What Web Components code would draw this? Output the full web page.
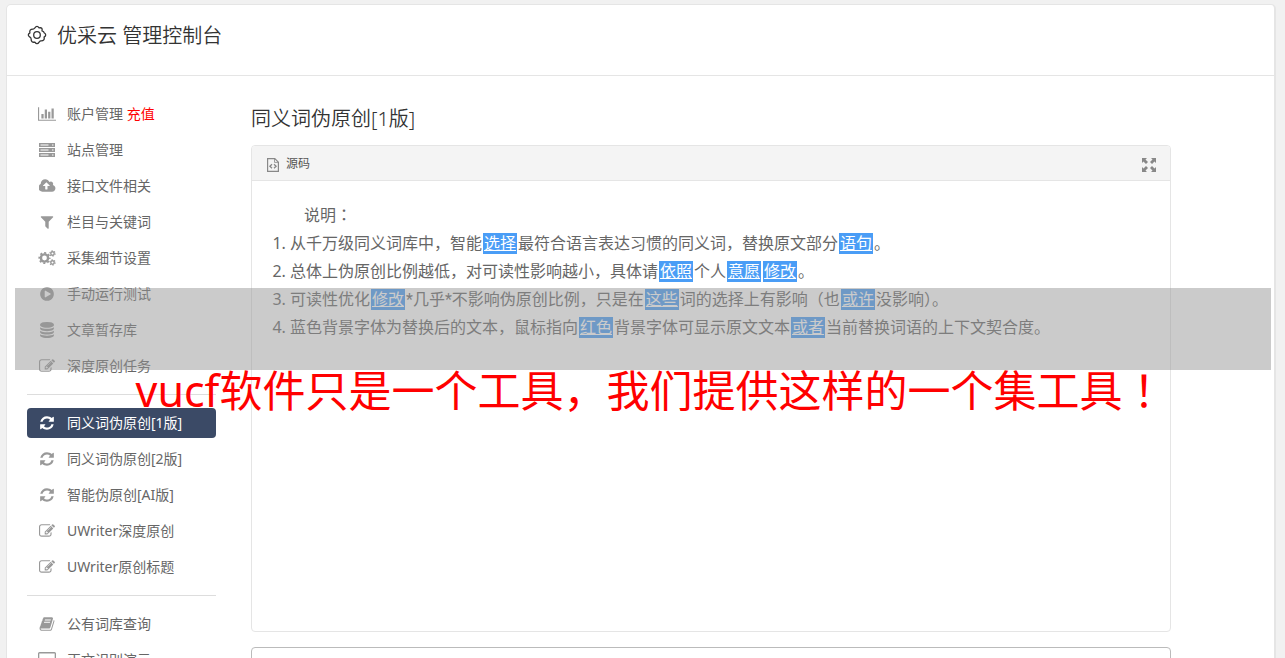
<!DOCTYPE html>
<html lang="zh-CN">
<head>
<meta charset="utf-8">
<title>优采云 管理控制台</title>
<style>
html{scrollbar-width:none}
body{margin:0;padding:4px 9px 20px 6px;background:#f1f1f1;color:#666;position:relative;
font-family:"Noto Sans","Noto Sans CJK SC",sans-serif;font-size:14px;line-height:30px}
.centred{font-family:"Noto Sans CJK TC",sans-serif;line-height:0}
</style>
</head>
<body>
<app-panel>
  <app-header slot="header">优采云 管理控制台</app-header>
  <nav-list slot="nav">
    <nav-item icon="chart">账户管理 <span style="color:#f00">充值</span></nav-item>
    <nav-item icon="server">站点管理</nav-item>
    <nav-item icon="cloud">接口文件相关</nav-item>
    <nav-item icon="filter">栏目与关键词</nav-item>
    <nav-item icon="cogs">采集细节设置</nav-item>
    <nav-item icon="play">手动运行测试</nav-item>
    <nav-item icon="database">文章暂存库</nav-item>
    <nav-item icon="edit">深度原创任务</nav-item>
  </nav-list>
  <nav-list slot="nav">
    <nav-item icon="refresh" active>同义词伪原创[1版]</nav-item>
    <nav-item icon="refresh">同义词伪原创[2版]</nav-item>
    <nav-item icon="refresh">智能伪原创[AI版]</nav-item>
    <nav-item icon="edit">UWriter深度原创</nav-item>
    <nav-item icon="edit">UWriter原创标题</nav-item>
  </nav-list>
  <nav-list slot="nav">
    <nav-item icon="book">公有词库查询</nav-item>
    <nav-item icon="desktop">正文识别演示</nav-item>
  </nav-list>
  <rewrite-editor heading="同义词伪原创[1版]"></rewrite-editor>
</app-panel>
<notice-banner>vucf软件只是一个工具，我们提供这样的一个集工具<span class="centred" lang="zh-TW">！</span></notice-banner>
<script>
const ICONS = {
  chart:['0 0 2048 1792','<path d="M640 896v512h-256v-512h256zm384-512v1024h-256v-1024h256zm1024 1152v128h-2048v-1536h128v1408h1920zm-640-896v768h-256v-768h256zm384-384v1152h-256v-1152h256z"/>'],
  server:['0 0 18 16','<path fill-rule="evenodd" d="M1 1h16v4H1zM2.500 2.500h8v1h-8zM14 2.500h1.500v1H14zM1 6h16v4H1zM2.500 7.500h8v1h-8zM14 7.500h1.500v1H14zM1 11h16v4H1zM2.500 12.500h8v1h-8zM14 12.500h1.500v1H14z"/>'],
  cloud:['0 0 1920 1792','<path d="M1216 864q0-14-9-23l-352-352q-9-9-23-9t-23 9l-351 351q-10 12-10 24 0 14 9 23t23 9h224v352q0 13 9.500 22.500t22.500 9.500h192q13 0 22.500-9.500t9.500-22.500v-352h224q13 0 22.500-9.500t9.500-22.500zm640 288q0 159-112.500 271.500t-271.500 112.500h-1088q-185 0-316.500-131.500t-131.500-316.500q0-130 70-240t188-165q-2-30-2-43 0-212 150-362t362-150q156 0 285.500 87t188.500 231q71-62 166-62 106 0 181 75t75 181q0 76-41 138 130 31 213.500 135.500t83.500 238.500z"/>'],
  filter:['0 0 1792 1792','<path d="M1595 295q17 41-14 70l-493 493v742q0 42-39 59-13 5-25 5-27 0-45-19l-256-256q-19-19-19-45v-486l-493-493q-31-29-14-70 17-39 59-39h1280q42 0 59 39z"/>'],
  cogs:['0 0 18 16','<g fill="none" stroke="currentColor"><circle cx="6.500" cy="8" r="3.600" stroke-width="2.400"/><circle cx="6.500" cy="8" r="5.200" stroke-width="1.800" stroke-dasharray="2 2.084" stroke-dashoffset="1"/><circle cx="14.500" cy="3.500" r="1.700" stroke-width="1.400"/><circle cx="14.500" cy="3.500" r="2.600" stroke-width="1.200" stroke-dasharray="1.300 1.423"/><circle cx="14.500" cy="12.500" r="1.700" stroke-width="1.400"/><circle cx="14.500" cy="12.500" r="2.600" stroke-width="1.200" stroke-dasharray="1.300 1.423"/></g>'],
  play:['0 0 1792 1792','<path d="M896 128q209 0 385.500 103t279.500 279.500 103 385.500-103 385.500-279.500 279.500-385.500 103-385.500-103-279.500-279.500-103-385.500 103-385.500 279.500-279.500 385.500-103zm384 823q32-18 32-55t-32-55l-544-320q-31-19-64-1-32 19-32 56v640q0 37 32 56 16 8 32 8 17 0 32-9z"/>'],
  database:['0 0 1792 1792','<path d="M896 768q237 0 443-43t325-127v170q0 69-103 128t-280 93.500-385 34.500-385-34.500-280-93.500-103-128v-170q119 84 325 127t443 43zm0 768q237 0 443-43t325-127v170q0 69-103 128t-280 93.500-385 34.500-385-34.500-280-93.500-103-128v-170q119 84 325 127t443 43zm0-384q237 0 443-43t325-127v170q0 69-103 128t-280 93.500-385 34.500-385-34.500-280-93.500-103-128v-170q119 84 325 127t443 43zm0-1152q208 0 385 34.500t280 93.500 103 128v128q0 69-103 128t-280 93.500-385 34.500-385-34.500-280-93.500-103-128v-128q0-69 103-128t280-93.500 385-34.500z"/>'],
  edit:['0 0 1792 1792','<path d="M888 1184l116-116-152-152-116 116v56h96v96h56zm440-720q-16-16-33 1l-350 350q-17 17-1 33t33-1l350-350q17-17 1-33zm80 594v190q0 119-84.500 203.500t-203.500 84.500h-832q-119 0-203.500-84.500t-84.500-203.500v-832q0-119 84.500-203.500t203.500-84.500h832q63 0 117 25 15 7 18 23 3 17-9 29l-49 49q-14 14-32 8-23-6-45-6h-832q-66 0-113 47t-47 113v832q0 66 47 113t113 47h832q66 0 113-47t47-113v-126q0-13 9-22l64-64q15-15 35-7t20 29zm-96-738l288 288-672 672h-288v-288zm444 132l-92 92-288-288 92-92q28-28 68-28t68 28l152 152q28 28 28 68t-28 68z"/>'],
  refresh:['0 0 1792 1792','<path d="M1639 1056q0 5-1 7-64 268-268 434.500t-478 166.500q-146 0-282.500-55t-243.500-157l-129 129q-19 19-45 19t-45-19-19-45v-448q0-26 19-45t45-19h448q26 0 45 19t19 45-19 45l-137 137q71 66 161 102t187 36q134 0 250-65t186-179q11-17 53-117 8-23 30-23h192q13 0 22.500 9.500t9.500 22.500zm25-800v448q0 26-19 45t-45 19h-448q-26 0-45-19t-19-45 19-45l138-138q-148-137-349-137-134 0-250 65t-186 179q-11 17-53 117-8 23-30 23h-199q-13 0-22.500-9.500t-9.500-22.500v-7q65-268 270-434.500t480-166.500q146 0 284 55.500t245 156.500l130-129q19-19 45-19t45 19 19 45z"/>'],
  book:['0 0 1792 1792','<path d="M1703 478q40 57 18 129l-275 906q-19 64-76.500 107.500t-122.500 43.500h-923q-77 0-148.500-53.500t-99.500-131.500q-24-67-2-127 0-4 3-27t4-37q1-8-3-21.500t-3-19.500q2-11 8-21t16.500-23.500 16.500-23.500q23-38 45-91.500t30-91.500q3-10 .5-30t-.5-28q3-11 17-28t17-23q21-36 42-92t25-90q1-9-2.500-32t.5-28q4-13 22-30.500t22-22.500q19-26 42.500-84.500t27.500-96.500q1-8-3-25.500t-2-26.500q2-8 9-18t18-23 17-21q8-12 16.500-30.500t15-35 16-36 19.500-32 26.500-23.500 36-11.500 47.500 5.500l-1 3q38-9 51-9h761q74 0 114 56t18 130l-274 906q-36 119-71.500 153.500t-128.500 34.500h-869q-27 0-38 15-11 16-1 43 24 70 144 70h923q29 0 56-15.500t35-41.500l300-987q7-22 5-57 38 15 59 43zm-1064 2q-4 13 2 22.500t20 9.500h608q13 0 25.500-9.500t16.500-22.500l21-64q4-13-2-22.500t-20-9.500h-608q-13 0-25.500 9.500t-16.500 22.500zm-83 256q-4 13 2 22.500t20 9.500h608q13 0 25.500-9.500t16.500-22.500l21-64q4-13-2-22.500t-20-9.500h-608q-13 0-25.500 9.500t-16.500 22.500z"/>'],
  desktop:['0 0 18 16','<path fill-rule="evenodd" d="M1.500 0h15q1.500 0 1.500 1.500v9q0 1.500-1.500 1.500h-5l1 2v1h-7v-1l1-2h-5q-1.500 0-1.500-1.500v-9Q0 0 1.500 0zM1.300 1.500v8h15.400v-8z"/>'],
  gear:['0 0 20 20','<g fill="none" stroke="currentColor" stroke-width="1.300"><circle cx="10" cy="10" r="3.300"/><path stroke-linejoin="round" d="M7.900 2.900Q10-.3 12.100 2.900 15.900 2 15 5.900q2 .6 2.100 1.900Q20.300 10 17.100 12.100 18 15.900 14.100 15.900q-.9-.2-2 1.200Q10 20.300 7.900 17.100 4.100 18 4.100 14.100q.2-.9-1.200-2Q-.3 10 2.900 7.900 2 4.100 5.900 4.100q.9.200 2-1.200z"/></g>'],
  source:['0 0 12 14','<g fill="none" stroke="currentColor"><path d="M.6.600h7.200l3.600 3.600v9.200H.6z" stroke-width="1.200"/><path d="M7.500.600v3.800h3.900" stroke-width=".8"/><path d="M5 6.200 2.900 8.200 5 10.200M7 6.200l2.100 2L7 10.200" stroke-width="1.300"/></g>'],
  expand:['0 0 14 14','<path d="M0 0h5L3.500 1.500 6 4 4 6 1.500 3.500 0 5zM14 0v5l-1.500-1.500L10 6 8 4l2.500-2.500L9 0zM0 14V9l1.500 1.500L4 8l2 2-2.500 2.500L5 14zM14 14H9l1.500-1.500L8 10l2-2 2.500 2.500L14 9z"/>']
};
const svg = (name, w, h) => `<svg viewBox="${ICONS[name][0]}" width="${w}" height="${h}" fill="currentColor" aria-hidden="true">${ICONS[name][1]}</svg>`;
const define = (name, render) => customElements.define(name, class extends HTMLElement {
  connectedCallback(){
    if (!this.shadowRoot) this.attachShadow({mode:'open'}).innerHTML = render(this);
  }
});

define('app-panel', () => `<style>
:host{display:block;background:#fff;border:1px solid #e5e5e5;border-right-width:2px;border-radius:5px}
.body{display:flex;align-items:flex-start;gap:35px;padding:23px 20px}
nav{flex:0 0 189px}
main{flex:1;min-width:0;max-width:920px}
</style><slot name="header"></slot><div class="body"><nav><slot name="nav"></slot></nav><main><slot></slot></main></div>`);

define('app-header', () => `<style>
:host{display:block;border-bottom:1px solid #e5e5e5;padding:16px 20px 24px}
h1{display:flex;align-items:center;gap:10px;margin:0;font-size:20px;font-weight:350;line-height:30px;color:#333}
svg{margin-bottom:3px}
</style><h1>${svg('gear',20,20)}<span><slot></slot></span></h1>`);

define('nav-list', () => `<style>
:host{display:block}
:host(:not(:first-of-type)){border-top:1px solid #ddd;margin-top:13px;padding-top:13px}
div{display:flex;flex-direction:column;gap:6px}
</style><div><slot></slot></div>`);

define('nav-item', el => {
  const icon = el.getAttribute('icon');
  const wide = ['chart','server','cogs','desktop'].includes(icon);
  return `<style>
:host{display:block}
a{display:flex;align-items:center;gap:10px;padding:0 10px;height:30px;color:#666;text-decoration:none;border-radius:4px;white-space:nowrap}
.icon{display:flex;justify-content:center;width:20px;color:#999}
:host([active]) a{background:#3b4a66;color:#fff}
:host([active]) .icon{color:#fff}
</style><a href="#"><span class="icon">${svg(icon, wide ? 18 : icon === 'cloud' ? 17 : 16, 16)}</span><span><slot></slot></span></a>`;
});

define('swapped-word', () => `<style>
:host{display:inline-block;height:21px;line-height:21px;margin:0 1px;padding:0 1px;background:#4a9df6;color:#fff;text-decoration:underline}
</style><slot></slot>`);

define('rewrite-editor', el => `<style>
:host{display:block}
h2{margin:0 0 11px;padding-top:5px;font-size:20px;font-weight:350;line-height:30px;color:#333}
section{border:1px solid #e5e5e5;border-radius:4px;overflow:hidden}
.bar{display:flex;justify-content:space-between;align-items:center;box-sizing:border-box;height:35px;padding:2px 14px 0 15px;background:#f4f4f4;border-bottom:1px solid #e5e5e5}
button{display:flex;align-items:center;gap:7px;padding:0;border:0;background:none;font:inherit;font-size:12px;line-height:20px;color:#555}
button svg{color:#888;margin-top:2px}
.text{min-height:410px;padding:20px 20px 20px;font-size:16px;line-height:28px}
p{margin:0;text-indent:32px}
ol{margin:0;padding-left:18px}
.star{font-family:Roboto,sans-serif;line-height:0}
.centred{font-family:"Noto Sans CJK TC",sans-serif;line-height:0}
textarea{display:block;box-sizing:border-box;width:100%;height:120px;margin-top:15px;border:1px solid #bbb;border-radius:4px;resize:none}
</style>
<h2>${el.getAttribute('heading')}</h2>
<section><div class="bar"><button type="button">${svg('source',12,14)}源码</button><button type="button" aria-label="全屏">${svg('expand',14,14)}</button></div>
<div class="text"><p>说明<span class="centred" lang="zh-TW">：</span></p><ol>
<li>从千万级同义词库中，智能<swapped-word>选择</swapped-word>最符合语言表达习惯的同义词，替换原文部分<swapped-word>语句</swapped-word>。</li>
<li>总体上伪原创比例越低，对可读性影响越小，具体请<swapped-word>依照</swapped-word>个人<swapped-word>意愿</swapped-word><swapped-word>修改</swapped-word>。</li>
<li>可读性优化<swapped-word>修改</swapped-word><span class="star">*</span>几乎<span class="star">*</span>不影响伪原创比例，只是在<swapped-word>这些</swapped-word>词的选择上有影响（也<swapped-word>或许</swapped-word>没影响）。</li>
<li>蓝色背景字体为替换后的文本，鼠标指向<swapped-word>红色</swapped-word>背景字体可显示原文文本<swapped-word>或者</swapped-word>当前替换词语的上下文契合度。</li>
</ol></div></section>
<textarea aria-label="原文"></textarea>`);

define('notice-banner', () => `<style>
:host{position:absolute;top:288px;left:15px;right:14px;pointer-events:none}
.band{height:82px;background:rgba(148,148,148,.49)}
.words{height:42px;padding-left:15px;line-height:42px;font-size:43px;text-align:center;white-space:nowrap;color:#f00}
</style><div class="band"></div><div class="words"><slot></slot></div>`);
</script>
</body>
</html>
